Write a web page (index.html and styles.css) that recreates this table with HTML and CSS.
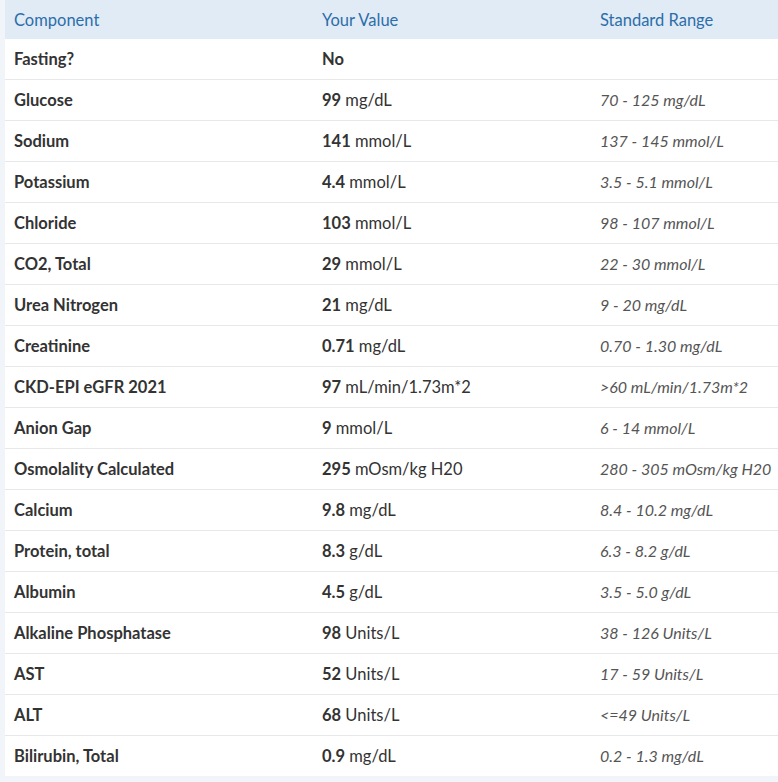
FILE: index.html
```html
<!DOCTYPE html>
<html>
<head>
<meta charset="utf-8">
<link rel="stylesheet" href="styles.css">
</head>
<body>
<div class="wrap">
<table class="results">
<thead>
<tr><th class="c1">Component</th><th class="c2">Your Value</th><th class="c3">Standard Range</th></tr>
</thead>
<tbody>
<tr><td class="name">Fasting?</td><td class="val"><b>No</b></td><td class="range"></td></tr>
<tr><td class="name">Glucose</td><td class="val"><b>99</b> mg/dL</td><td class="range">70 - 125 mg/dL</td></tr>
<tr><td class="name">Sodium</td><td class="val"><b>141</b> mmol/L</td><td class="range">137 - 145 mmol/L</td></tr>
<tr><td class="name">Potassium</td><td class="val"><b>4.4</b> mmol/L</td><td class="range">3.5 - 5.1 mmol/L</td></tr>
<tr><td class="name">Chloride</td><td class="val"><b>103</b> mmol/L</td><td class="range">98 - 107 mmol/L</td></tr>
<tr><td class="name">CO2, Total</td><td class="val"><b>29</b> mmol/L</td><td class="range">22 - 30 mmol/L</td></tr>
<tr><td class="name">Urea Nitrogen</td><td class="val"><b>21</b> mg/dL</td><td class="range">9 - 20 mg/dL</td></tr>
<tr><td class="name">Creatinine</td><td class="val"><b>0.71</b> mg/dL</td><td class="range">0.70 - 1.30 mg/dL</td></tr>
<tr><td class="name">CKD-EPI eGFR 2021</td><td class="val"><b>97</b> mL/min/1.73m*2</td><td class="range">&gt;60 mL/min/1.73m*2</td></tr>
<tr><td class="name">Anion Gap</td><td class="val"><b>9</b> mmol/L</td><td class="range">6 - 14 mmol/L</td></tr>
<tr><td class="name">Osmolality Calculated</td><td class="val"><b>295</b> mOsm/kg H20</td><td class="range">280 - 305 mOsm/kg H20</td></tr>
<tr><td class="name">Calcium</td><td class="val"><b>9.8</b> mg/dL</td><td class="range">8.4 - 10.2 mg/dL</td></tr>
<tr><td class="name">Protein, total</td><td class="val"><b>8.3</b> g/dL</td><td class="range">6.3 - 8.2 g/dL</td></tr>
<tr><td class="name">Albumin</td><td class="val"><b>4.5</b> g/dL</td><td class="range">3.5 - 5.0 g/dL</td></tr>
<tr><td class="name">Alkaline Phosphatase</td><td class="val"><b>98</b> Units/L</td><td class="range">38 - 126 Units/L</td></tr>
<tr><td class="name">AST</td><td class="val"><b>52</b> Units/L</td><td class="range">17 - 59 Units/L</td></tr>
<tr><td class="name">ALT</td><td class="val"><b>68</b> Units/L</td><td class="range">&lt;=49 Units/L</td></tr>
<tr><td class="name">Bilirubin, Total</td><td class="val"><b>0.9</b> mg/dL</td><td class="range">0.2 - 1.3 mg/dL</td></tr>
</tbody>
</table>
</div>
</body>
</html>
```

FILE: styles.css
```css
html, body {
  margin: 0;
  padding: 0;
  background: #f1f5fa;
}
body {
  font-family: "Lato", "Noto Sans", sans-serif;
  font-size: 16.5px;
  color: #333;
}
.wrap {
  padding: 0 0 6px 5px;
}
.results {
  width: 773px;
  table-layout: fixed;
  border-collapse: collapse;
  background: #fff;
}
.results th {
  background: #e1ebf5;
  color: #2c6eab;
  font-weight: normal;
  text-align: left;
  height: 39px;
  padding: 0 9px;
  box-sizing: border-box;
  vertical-align: middle;
  white-space: nowrap;
}
.results .c1 { width: 308px; }
.results .c2 { width: 278px; }
.results td {
  height: 41px;
  padding: 0 9px;
  box-sizing: border-box;
  vertical-align: middle;
  border-top: 1px solid #e6e8ea;
  white-space: nowrap;
}
.results tbody tr:first-child td { border-top: none; height: 40px; }
.name { font-weight: bold; }
.val b { font-weight: bold; }
.range { font-style: italic; color: #555; font-size: 16px; padding-right: 0; }
```
